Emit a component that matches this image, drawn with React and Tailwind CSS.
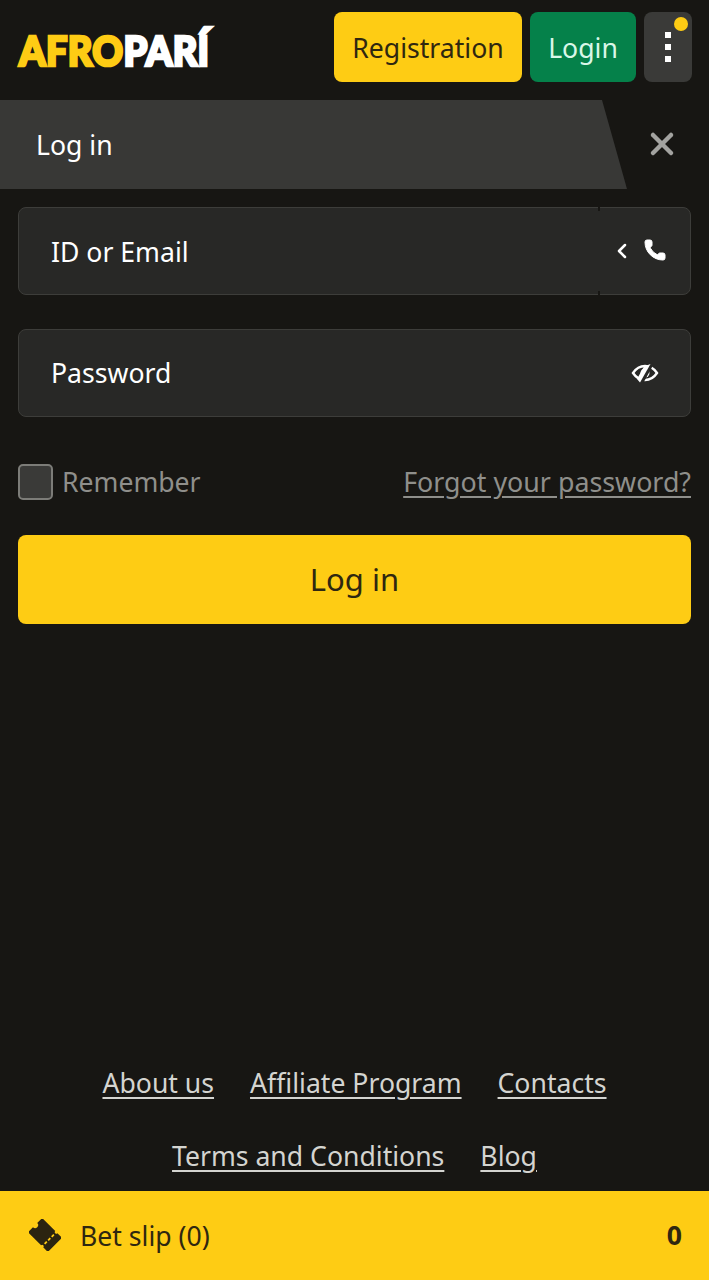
import { ChevronLeft, Phone, X } from "lucide-react";

const footerRows = [
  ["About us", "Affiliate Program", "Contacts"],
  ["Terms and Conditions", "Blog"],
];

const EyeOff = () => (
  <svg width="28" height="24" viewBox="0 0 28 24" fill="none">
    <path d="M2 12c3-4.500 7-7 12-7s9 2.500 12 7c-3 4.500-7 7-12 7s-9-2.500-12-7Z" stroke="white" strokeWidth="2.400" />
    <circle cx="14" cy="12" r="4.500" fill="white" />
    <path d="M21 2 10 22" stroke="#282826" strokeWidth="4" />
    <path d="M19.500 3 13 5.500 6 18l3 3.500L19.500 3Z" fill="white" />
  </svg>
);

const Ticket = () => (
  <svg width="32" height="32" viewBox="0 0 32 32">
    <g transform="rotate(45 16 16)">
      <path
        d="M2 6h18.500a1.500 1.500 0 0 0 3 0H30v20h-6.500a1.500 1.500 0 0 0-3 0H2v-7a3 3 0 0 0 0-6Z"
        fill="#2b2410"
      />
      <path d="M22 9.500v14" stroke="#fecc14" strokeWidth="1.800" strokeDasharray="3 2" />
    </g>
  </svg>
);

const App = () => {
  return (
    <div className="flex min-h-[1280px] flex-col bg-[#171613] font-['Noto_Sans',sans-serif] text-[26.600px]">
      {/* Header */}
      <header className="flex h-[100px] items-start justify-between pt-3 pl-[19px] pr-[17px]">
        <div className="mt-[12px] flex origin-left scale-y-110 font-['Lato',sans-serif] text-[38px] leading-[50px] font-black tracking-[0.300px] [-webkit-text-stroke:2.500px_currentColor]">
          <span className="text-[#fecc14]">AFRO</span>
          <span className="text-white">PARÍ</span>
        </div>
        <div className="flex gap-2">
          <button className="h-[70px] w-[188px] rounded-lg bg-[#fecc14] pt-1 text-[#2f2710]">
            Registration
          </button>
          <button className="h-[70px] w-[106px] rounded-lg bg-[#05814a] pt-1 text-[#d9f7e8]">
            Login
          </button>
          <button className="relative flex h-[70px] w-12 flex-col items-center justify-center gap-[6px] rounded-lg bg-[#3a3a38]">
            <span className="h-[6px] w-[6px] bg-white" />
            <span className="h-[6px] w-[6px] bg-white" />
            <span className="h-[6px] w-[6px] bg-white" />
            <span className="absolute top-[5px] right-1 h-[14px] w-[14px] rounded-full bg-[#fecc14]" />
          </button>
        </div>
      </header>

      {/* Tab */}
      <div className="flex h-[89px] items-center">
        <div className="flex h-full w-[627px] items-center bg-[#383836] pt-[2px] pl-9 text-white [clip-path:polygon(0_0,602px_0,627px_100%,0_100%)]">
          Log in
        </div>
        <X className="mb-[2px] ml-[17px] text-[#a3a3a0]" size={36} strokeWidth={3} />
      </div>

      {/* Form */}
      <div className="flex flex-col px-[18px] pt-[18px]">
        <div className="relative flex h-[88px] items-center justify-between rounded-lg border border-[#3d3d3a] bg-[#282826] pr-[23px] pl-[32px] text-white">
          <span className="pt-1">ID or Email</span>
          <div className="flex items-center gap-[9px]">
            <ChevronLeft size={24} strokeWidth={2.500} />
            <Phone size={24} fill="white" strokeWidth={1} className="mb-[3px]" />
          </div>
          <span className="absolute -top-px right-[90px] h-1 w-[2px] bg-[#171613]" />
          <span className="absolute right-[90px] -bottom-px h-1 w-[2px] bg-[#171613]" />
        </div>
        <div className="mt-[34px] flex h-[88px] items-center justify-between rounded-lg border border-[#3d3d3a] bg-[#282826] pr-[31px] pl-[32px] text-white">
          <span className="pt-[2px]">Password</span>
          <EyeOff />
        </div>
        <div className="mt-[47px] flex h-9 items-center justify-between">
          <div className="flex items-center gap-[9px] text-[#8f8f8b]">
            <span className="h-9 w-[35px] rounded-[5px] border-2 border-[#7c7c78] bg-[#3a3a38]" />
            <span className="pt-[2px]">Remember</span>
          </div>
          <a className="text-[26.800px] text-[#8f8f8b] underline underline-offset-4">
            Forgot your password?
          </a>
        </div>
        <button className="mt-[35px] h-[89px] rounded-lg bg-[#fecc14] text-[31px] text-[#2f2710]">
          Log in
        </button>
      </div>

      {/* Footer links */}
      <div className="mt-auto flex flex-col gap-[37px] pb-[17px]">
        {footerRows.map((row, idx) => (
          <div key={idx} className="flex h-9 items-center justify-center gap-9 pt-[2px]">
            {row.map((link) => (
              <a key={link} className="text-[#d4d4d0] underline underline-offset-4">
                {link}
              </a>
            ))}
          </div>
        ))}
      </div>

      {/* Bet slip */}
      <div className="flex h-[89px] items-center justify-between bg-[#fecc14] pr-[27px] pl-[29px] text-[#2f2710]">
        <div className="flex items-center gap-[19px]">
          <Ticket />
          <span className="pt-[2px]">Bet slip (0)</span>
        </div>
        <span className="font-bold">0</span>
      </div>
    </div>
  );
};

export default App;
